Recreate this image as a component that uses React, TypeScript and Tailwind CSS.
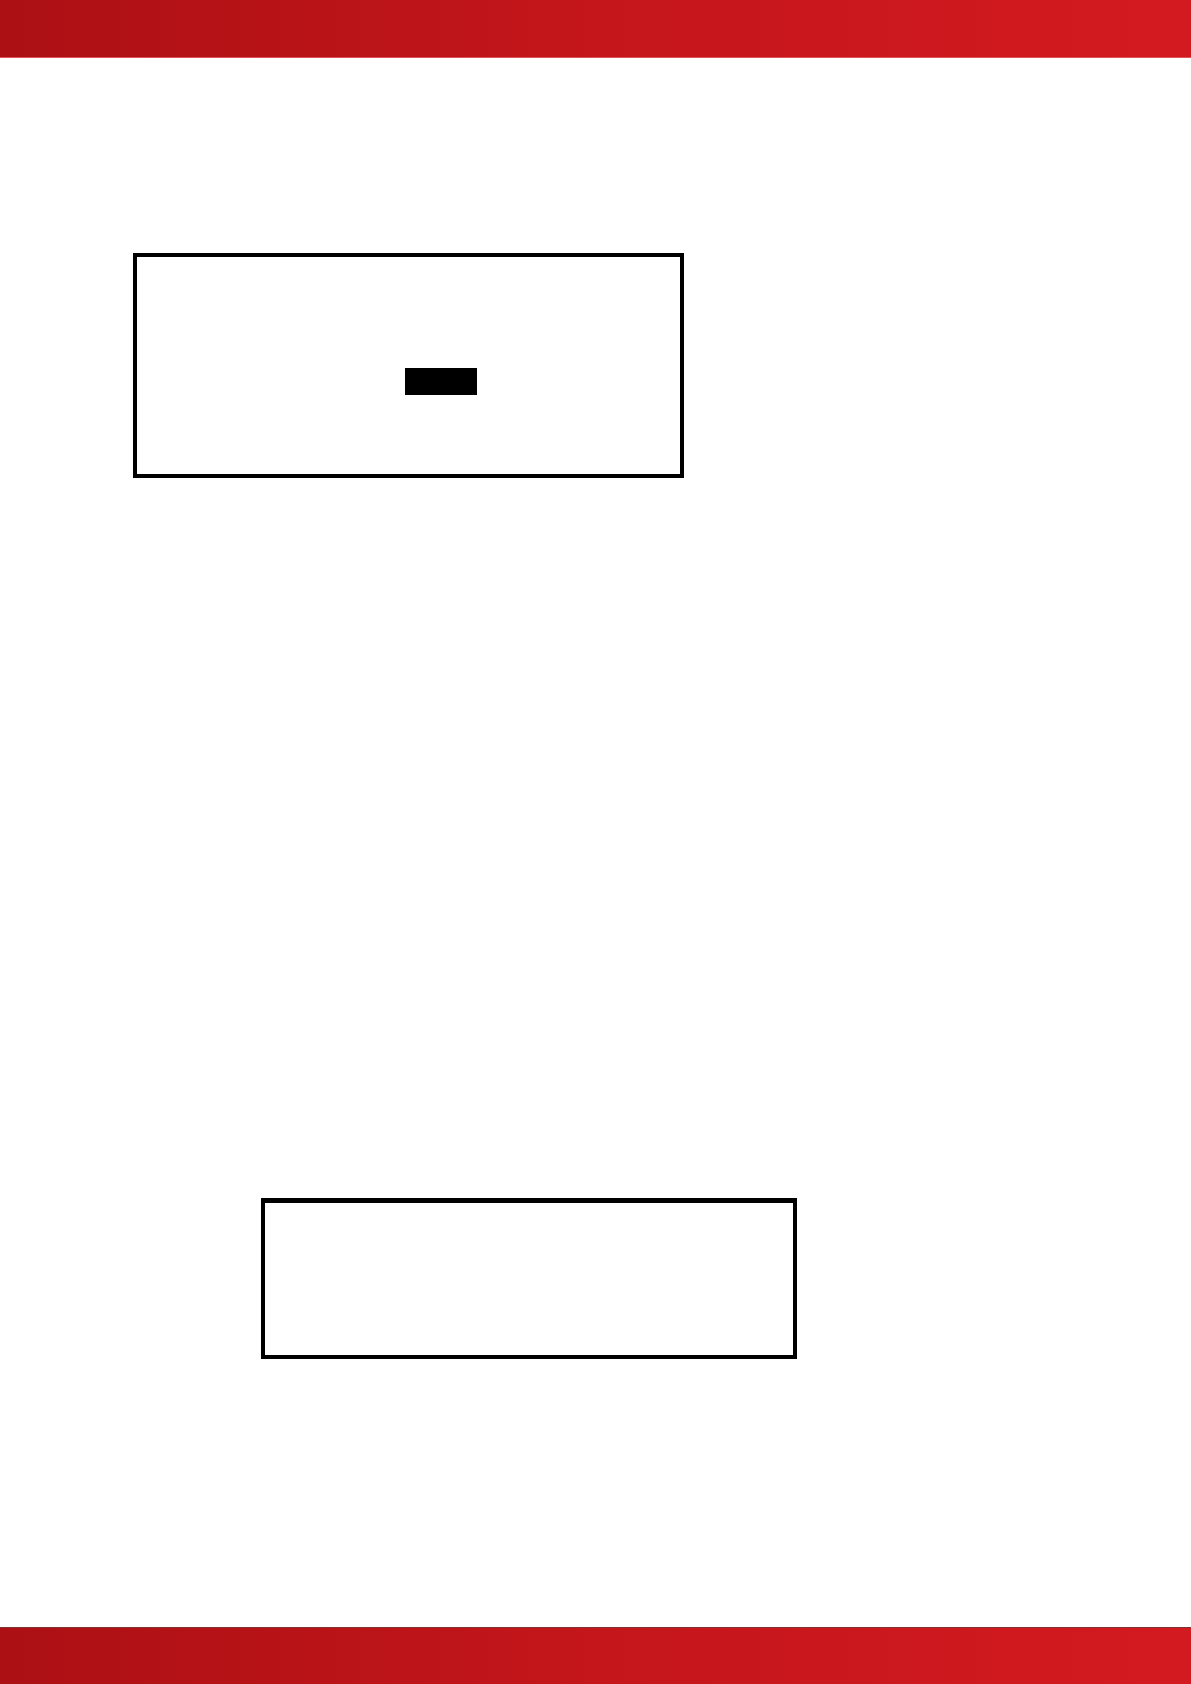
export default function App() {
  return (
    <div className="min-h-screen flex flex-col bg-white">
      <header className="shrink-0 border-b border-[#de5357]">
        <div className="h-[57px] bg-gradient-to-r from-[#ac1014] via-[#c4161b] to-[#d31a20]" />
      </header>

      <main className="grow flex flex-col items-start gap-[720px] pt-[195px] pb-12">
        {/* display with the highlighted field */}
        <section className="w-full pl-[133px] pr-6">
          <div className="max-w-[551px] border-4 border-black pt-[111px] pb-[79px] pl-[268px]">
            <div className="w-[72px] h-[27px] bg-black" />
          </div>
        </section>

        {/* empty display */}
        <section className="w-full pl-[261px] pr-6">
          <div className="max-w-[536px] min-h-[161px] border-4 border-t-5 border-black" />
        </section>
      </main>

      <footer className="shrink-0 border-t border-[#7e3430]">
        <div className="h-14 bg-gradient-to-r from-[#ac1014] via-[#c4161b] to-[#d31a20]" />
      </footer>
    </div>
  );
}
